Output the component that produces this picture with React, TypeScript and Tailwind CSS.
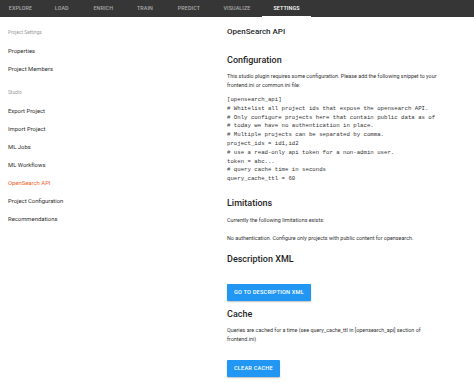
import React from "react";

const tabs: { label: string; w: string; active?: boolean }[] = [
  { label: "EXPLORE", w: "w-[41px]" },
  { label: "LOAD", w: "w-[41.5px]" },
  { label: "ENRICH", w: "w-[41.5px]" },
  { label: "TRAIN", w: "w-[42px]" },
  { label: "PREDICT", w: "w-[46px]" },
  { label: "VISUALIZE", w: "w-[50px]" },
  { label: "SETTINGS", w: "w-[49px]", active: true },
];

function SideItem({ label, active }: { label: string; active?: boolean }) {
  return (
    <div
      className={`h-[18px] flex items-center text-[5.9px] ${
        active ? "text-[#f0612c]" : "text-[#2e2e2e]"
      }`}
    >
      {label}
    </div>
  );
}

function SideLabel({ label }: { label: string }) {
  return (
    <div className="h-[18px] flex items-center text-[4.8px] text-[#9a9a9a]">{label}</div>
  );
}

const code = `[opensearch_api]
# Whitelist all project ids that expose the opensearch API.
# Only configure projects here that contain public data as of
# today we have no authentication in place.
# Multiple projects can be separated by comma.
project_ids = id1,id2
# use a read-only api token for a non-admin user.
token = abc...
# query cache time in seconds
query_cache_ttl = 60`;

export default function App() {
  return (
    <div
      className="w-[474px] h-[391px] bg-white overflow-hidden"
      style={{ fontFamily: "Roboto, 'Liberation Sans', sans-serif" }}
    >
      <div className="h-[17px] bg-[#363636] flex">
        {tabs.map((t) => (
          <div
            key={t.label}
            className={`${t.w} h-full flex items-center justify-center relative text-[5.4px] font-medium tracking-[0.1px] ${
              t.active ? "text-white" : "text-[#a8a8a8]"
            }`}
          >
            {t.label}
            {t.active && (
              <div className="absolute left-0 right-0 bottom-0 h-[1.5px] bg-white" />
            )}
          </div>
        ))}
      </div>
      <div className="flex">
        <div className="w-[227px] shrink-0 pl-[8px] pt-[7px]">
          <SideLabel label="Project Settings" />
          <SideItem label="Properties" />
          <SideItem label="Project Members" />
          <div className="h-[6px]" />
          <SideLabel label="Studio" />
          <SideItem label="Export Project" />
          <SideItem label="Import Project" />
          <SideItem label="ML Jobs" />
          <SideItem label="ML Workflows" />
          <SideItem label="OpenSearch API" active />
          <SideItem label="Project Configuration" />
          <SideItem label="Recommendations" />
        </div>
        <div className="flex-1 pt-[9px] text-[#222]">
          <div className="text-[8px] leading-[12px] font-medium text-[#1f1f1f]">OpenSearch API</div>
          <div className="mt-[15px] text-[9px] leading-[14px] font-medium text-[#1f1f1f]">
            Configuration
          </div>
          <div className="mt-[5px] text-[5.4px] leading-[9px] text-[#333] whitespace-nowrap">
            This studio plugin requires some configuration. Please add the following snippet to your
            <br />
            frontend.ini or common.ini file:
          </div>
          <pre
            className="mt-[6px] text-[5.7px] leading-[8.8px] text-[#333]"
            style={{ fontFamily: "'Liberation Mono', 'DejaVu Sans Mono', monospace" }}
          >
            {code}
          </pre>
          <div className="mt-[12px] text-[9px] leading-[14px] font-medium text-[#1f1f1f]">
            Limitations
          </div>
          <div className="mt-[6.5px] text-[5.4px] leading-[9px] text-[#333] whitespace-nowrap">
            Currently the following limitations exists:
          </div>
          <div className="mt-[9px] text-[5.4px] leading-[9px] text-[#333] whitespace-nowrap">
            No authentication. Configure only projects with public content for opensearch.
          </div>
          <div className="mt-[8.5px] text-[9px] leading-[14px] font-medium text-[#1f1f1f]">
            Description XML
          </div>
          <div className="mt-[18px] flex">
            <div className="h-[17px] px-[7px] bg-[#2196f3] rounded-[1px] shadow-[0_1px_1.5px_rgba(0,0,0,0.25)] flex items-center text-white text-[5.7px] font-medium tracking-[0.15px]">
              GO TO DESCRIPTION XML
            </div>
          </div>
          <div className="mt-[6px] text-[9px] leading-[14px] font-medium text-[#1f1f1f]">Cache</div>
          <div className="mt-[5.5px] text-[5.4px] leading-[9px] text-[#333] whitespace-nowrap">
            Queries are cached for a time (see query_cache_ttl in [opensearch_api] section of
            <br />
            frontend.ini)
          </div>
          <div className="mt-[15.5px] flex">
            <div className="h-[17px] px-[7px] bg-[#2196f3] rounded-[1px] shadow-[0_1px_1.5px_rgba(0,0,0,0.25)] flex items-center text-white text-[5.7px] font-medium tracking-[0.15px]">
              CLEAR CACHE
            </div>
          </div>
        </div>
      </div>
    </div>
  );
}
